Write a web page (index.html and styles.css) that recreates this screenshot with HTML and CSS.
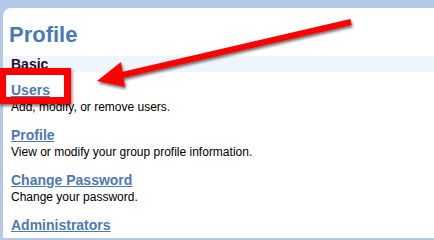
FILE: index.html
```html
<!DOCTYPE html>
<html>
<head>
<meta charset="utf-8">
<link rel="stylesheet" href="styles.css">
</head>
<body>
<div class="panel">
  <h1 class="title">Profile</h1>
  <div class="section">Basic</div>
  <div class="items">
    <div class="item">
      <a class="link" href="#">Users</a>
      <div class="desc">Add, modify, or remove users.</div>
    </div>
    <div class="item">
      <a class="link" href="#">Profile</a>
      <div class="desc">View or modify your group profile information.</div>
    </div>
    <div class="item">
      <a class="link" href="#">Change Password</a>
      <div class="desc">Change your password.</div>
    </div>
    <div class="item">
      <a class="link" href="#">Administrators</a>
    </div>
  </div>
</div>
<div class="highlight"></div>
<svg class="arrow" width="434" height="238" viewBox="0 0 434 238">
  <defs>
    <filter id="sh" x="-20%" y="-50%" width="140%" height="200%">
      <feDropShadow dx="1" dy="2" stdDeviation="1.5" flood-color="#000" flood-opacity="0.6"/>
    </filter>
  </defs>
  <g filter="url(#sh)">
    <line x1="351" y1="22" x2="118" y2="76" stroke="#ff0000" stroke-width="6"/>
    <polygon points="97,81 121,62 125,87" fill="#ff0000"/>
  </g>
</svg>
</body>
</html>
```
FILE: styles.css
```css
html, body {
  margin: 0;
  padding: 0;
}
body {
  background: #b4c9e9;
  width: 434px;
  height: 238px;
  overflow: hidden;
  position: relative;
  font-family: "Liberation Sans", Arial, sans-serif;
}
.panel {
  margin: 8px 0 0 3px;
  background: #ffffff;
  border-top-left-radius: 8px;
  height: 230px;
  padding-top: 14px;
  box-sizing: border-box;
}
.title {
  margin: 0 0 8px 6px;
  font-size: 22px;
  line-height: 26px;
  font-weight: bold;
  color: #4a7ab5;
}
.section {
  background: #eef5fd;
  height: 16px;
  line-height: 16px;
  font-size: 14px;
  font-weight: bold;
  color: #1c0d2e;
  padding-left: 8px;
}
.items {
  padding-left: 8px;
  padding-top: 9px;
}
.item {
  margin-bottom: 11px;
}
.link {
  display: block;
  width: max-content;
  font-size: 14px;
  line-height: 19px;
  font-weight: bold;
  color: #4d79b2;
  text-decoration: underline;
}
.desc {
  font-size: 12px;
  line-height: 15px;
  color: #000;
}
.highlight {
  position: absolute;
  left: -1px;
  top: 68px;
  width: 58px;
  height: 22px;
  border: 7px solid #ff0000;
  box-shadow: 1px 2px 3px rgba(0, 0, 0, 0.55);
}
.arrow {
  position: absolute;
  left: 0;
  top: 0;
}
```
